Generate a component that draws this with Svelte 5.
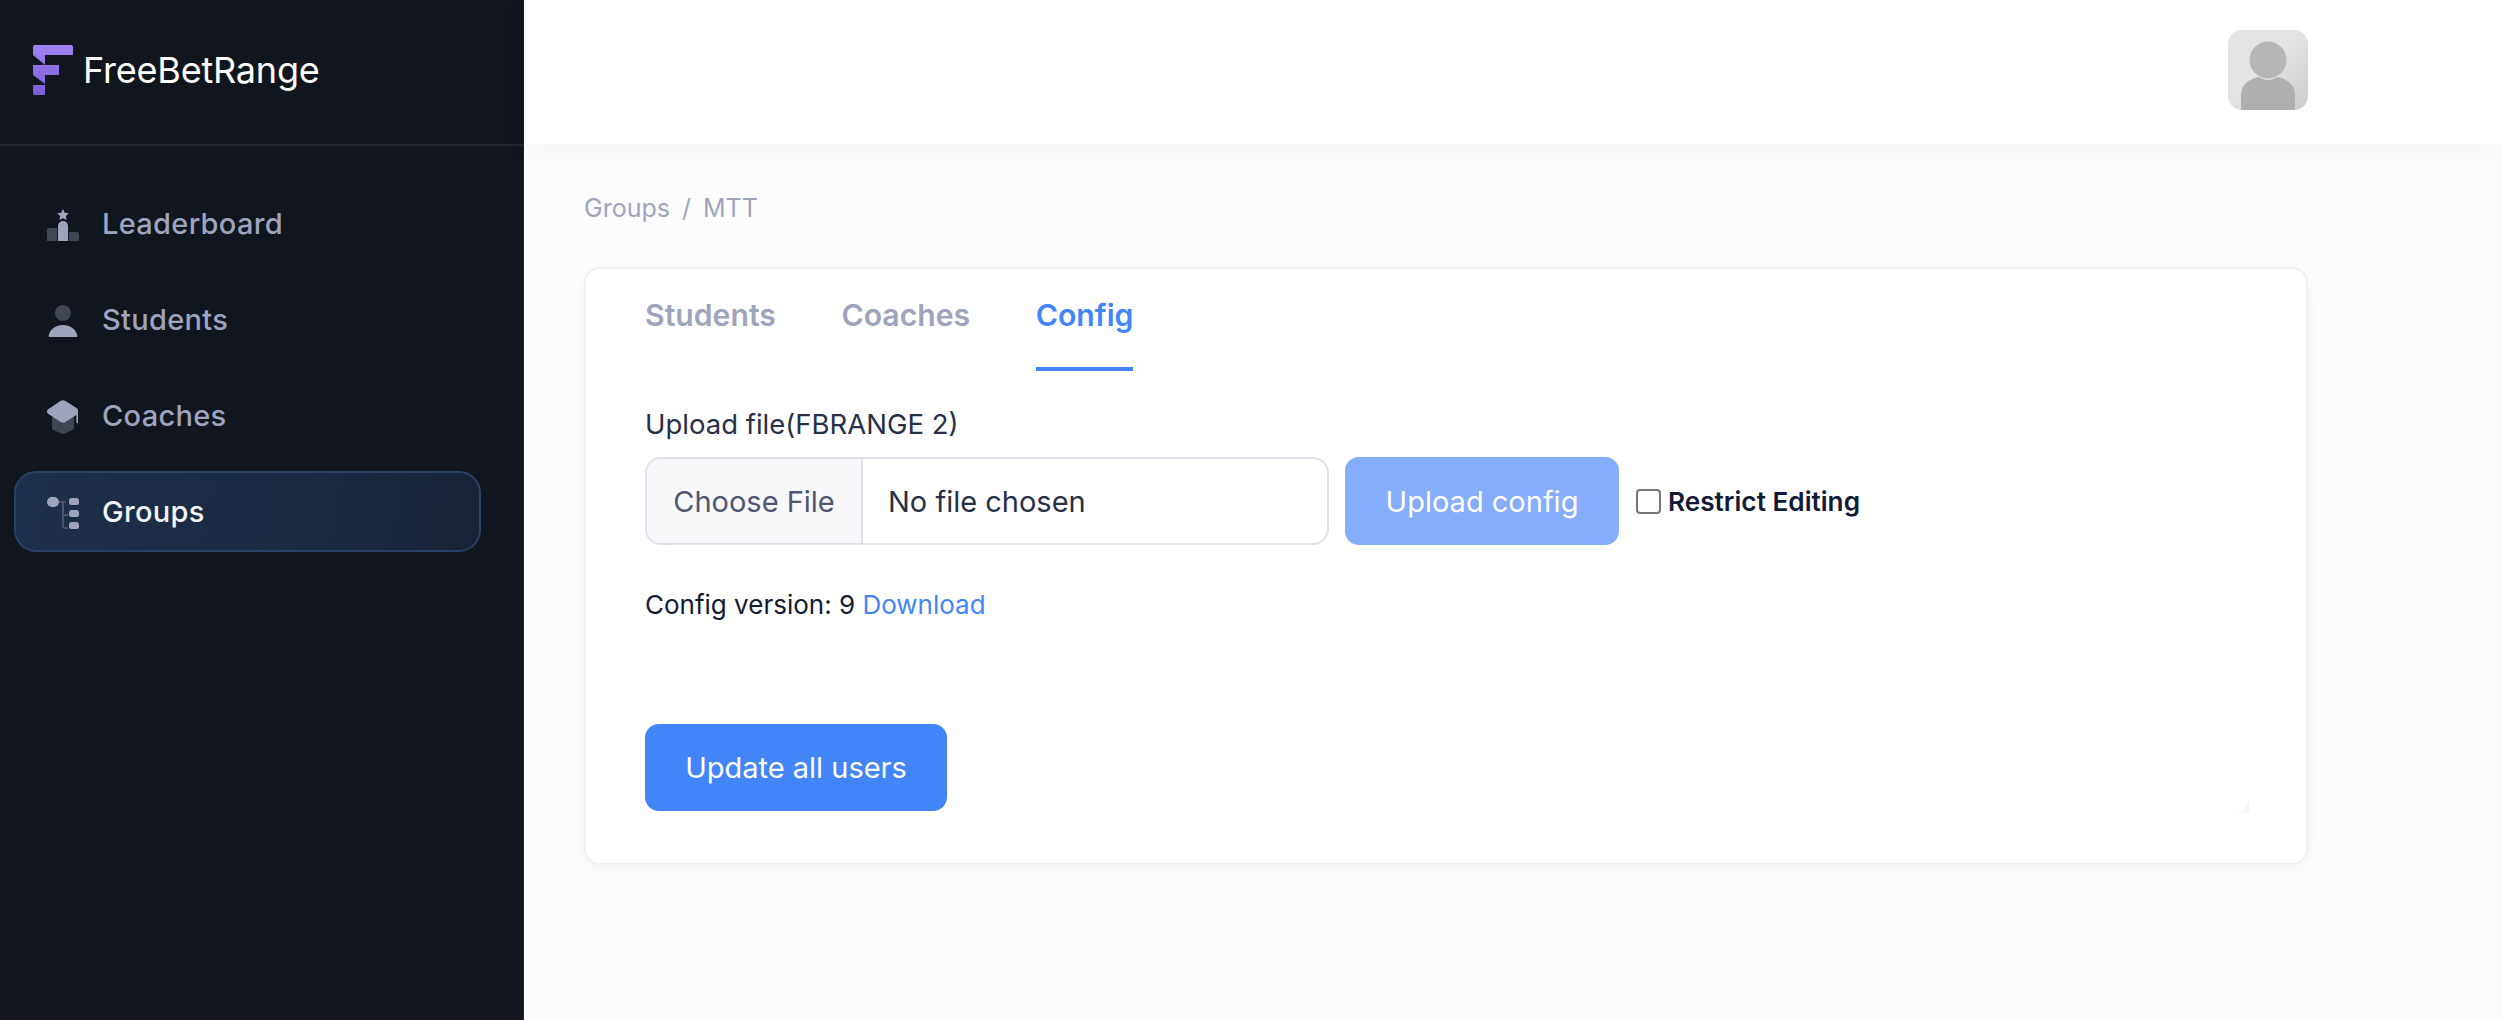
<script>
	const navItems = [
		{ name: 'Leaderboard', icon: 'board' },
		{ name: 'Students', icon: 'student' },
		{ name: 'Coaches', icon: 'coach' },
		{ name: 'Groups', icon: 'group', active: true }
	];
	const tabs = ['Students', 'Coaches', 'Config'];
	let activeTab = 'Config';
</script>

<div class="page">
	<aside class="sidebar">
		<div class="brand">
			<svg class="logo" viewBox="0 0 40 50" width="40" height="50">
				<defs>
					<linearGradient id="logoFill" x1="0" y1="0" x2="0" y2="1">
						<stop offset="0" stop-color="#9f82f0" />
						<stop offset="1" stop-color="#7c5bd6" />
					</linearGradient>
				</defs>
				<path
					fill="url(#logoFill)"
					d="M2 0H38a2 2 0 0 1 2 2V10H0V2a2 2 0 0 1 2-2ZM0 10H12V20ZM0 20H26V30H12V39L0 30ZM0 40H12V50H2a2 2 0 0 1-2-2Z"
				/>
			</svg>
			<span class="brand-name">FreeBetRange</span>
		</div>
		<nav class="nav">
			{#each navItems as item}
				<a href="#top" class="nav-item" class:active={item.active}>
					<svg class="nav-icon" viewBox="0 0 32 34" width="32" height="34">
						{#if item.icon === 'board'}
							<path fill="#414655" d="M2 20h8v13H0V22a2 2 0 0 1 2-2ZM22 24h8a2 2 0 0 1 2 2v7H22Z" />
							<path fill="#9ea4bb" d="M11 18a5 5 0 0 1 10 0v15H11Z" />
							<path fill="#9ea4bb" d="m16 1 1.800 3.700 4 .6-2.900 2.800.7 4-3.600-1.900-3.600 1.900.7-4-2.900-2.800 4-.6Z" />
						{:else if item.icon === 'student'}
							<circle cx="16" cy="9" r="8" fill="#414655" />
							<path fill="#9ea4bb" d="M2.500 33c-.6 0-1-.5-.9-1C3 25 8.500 21 16 21s13 4 14.400 11c.1.5-.3 1-.9 1Z" />
						{:else if item.icon === 'coach'}
							<path fill="#414655" d="M5 17h22v11c0 1-.5 1.600-1.300 2l-8 3.500a4 4 0 0 1-3.400 0l-8-3.500C5.500 29.600 5 29 5 28Z" />
							<path fill="#9ea4bb" d="M13.500 1a5 5 0 0 1 5 0l11 7c.9.6 1.500 1.500 1.500 2.500V23h-1.600V15l-11 7a5 5 0 0 1-4.800 0L1.500 14c-2-1.300-2-3.700 0-5Z" />
						{:else}
							<path fill="none" stroke="#4e5468" stroke-width="2" d="M10 6h9M16 6v24a2 2 0 0 0 2 2h3M16 19h5" />
							<rect x="0" y="1" width="12" height="10" rx="5" fill="#9ea4bb" />
							<rect x="22" y="2" width="10" height="7" rx="2.500" fill="#9ea4bb" />
							<rect x="22" y="14" width="10" height="7" rx="2.500" fill="#9ea4bb" />
							<rect x="22" y="26" width="10" height="7" rx="2.500" fill="#9ea4bb" />
						{/if}
					</svg>
					<span>{item.name}</span>
				</a>
			{/each}
		</nav>
	</aside>

	<div class="main">
		<header class="topbar">
			<svg class="avatar" viewBox="0 0 80 80" width="80" height="80">
				<defs>
					<linearGradient id="avatarBg" x1="0" y1="0" x2="1" y2="1">
						<stop offset="0.45" stop-color="#e3e4e6" />
						<stop offset="1" stop-color="#cbccce" />
					</linearGradient>
				</defs>
				<rect width="80" height="80" rx="14" fill="url(#avatarBg)" />
				<circle cx="40" cy="30" r="18.500" fill="#b5b6b8" />
				<path fill="#aeafb1" d="M13 80V66c0-12 8-17 18-19 3 2 6 3 9 3s6-1 9-3c10 2 18 7 18 19v14Z" />
			</svg>
		</header>

		<main class="content">
			<div class="crumbs">
				<span>Groups</span>
				<span class="sep">/</span>
				<span>MTT</span>
			</div>

			<section class="card">
				<div class="tabs">
					{#each tabs as tab}
						<button class="tab" class:current={tab === activeTab} onclick={() => (activeTab = tab)}>{tab}</button>
					{/each}
				</div>

				<div class="form">
					<div class="label">Upload file(FBRANGE 2)</div>
					<div class="upload-row">
						<label class="file">
							<span class="file-btn">Choose File</span>
							<span class="file-name">No file chosen</span>
						</label>
						<button class="btn disabled">Upload config</button>
						<label class="restrict">
							<input type="checkbox" />
							<span>Restrict Editing</span>
						</label>
					</div>
					<p class="version">Config version: 9 <a href="#top">Download</a></p>
					<button class="btn update">Update all users</button>
				</div>
				<div class="corner"></div>
			</section>
		</main>
	</div>
</div>

<style>
	:global(body) {
		margin: 0;
		background: #fcfcfc;
		font-family: Inter, 'Liberation Sans', sans-serif;
	}

	.page {
		display: flex;
		height: 1020px;
		overflow: hidden;
	}

	.sidebar {
		width: 523px;
		flex: none;
		background: #10151e;
		border-right: 1px solid #1e232d;
	}

	.brand {
		height: 146px;
		box-sizing: border-box;
		display: flex;
		align-items: center;
		gap: 10px;
		padding: 0 0 4px 33px;
		border-bottom: 2px solid #22262f;
		margin-bottom: 37px;
	}

	.brand-name {
		font-size: 36px;
		color: #fff;
		letter-spacing: -0.2px;
	}

	.nav {
		display: flex;
		flex-direction: column;
		gap: 15px;
		padding: 0 0 0 14px;
	}

	.nav-item {
		width: 467px;
		height: 81px;
		box-sizing: border-box;
		display: flex;
		align-items: center;
		gap: 23px;
		padding: 0 0 0 31px;
		border: 2px solid transparent;
		border-radius: 22px;
		color: #9ea4bd;
		font-size: 29px;
		font-weight: 500;
		letter-spacing: 0.3px;
		text-decoration: none;
	}

	.nav-item.active {
		background: linear-gradient(100deg, #1e2f4a, #1b2940 70%, #192337);
		border-color: #2a4266;
		color: #f3f5fa;
	}

	.nav-icon {
		flex: none;
		margin-top: 2px;
	}

	.main {
		flex: 1;
		min-width: 0;
	}

	.topbar {
		height: 144px;
		box-sizing: border-box;
		background: #fff;
		box-shadow: 0 8px 30px rgba(30, 35, 50, 0.035);
		display: flex;
		align-items: center;
		padding: 0 0 4px 1704px;
		position: relative;
	}

	.avatar {
		display: block;
	}

	.content {
		padding: 50px 0 0 60px;
		width: 1724px;
	}

	.crumbs {
		display: flex;
		gap: 12px;
		font-size: 25px;
		line-height: 29px;
		color: #9ea4bb;
	}

	.card {
		position: relative;
		margin-top: 44px;
		height: 598px;
		box-sizing: border-box;
		background: #fff;
		border: 2px solid #f1f1f3;
		border-radius: 16px;
		box-shadow: 0 4px 16px rgba(30, 35, 50, 0.04);
		padding: 0 58px 0 59px;
	}

	.tabs {
		display: flex;
		gap: 65.500px;
	}

	.tab {
		padding: 0 0 6px;
		height: 102px;
		border: 0;
		border-bottom: 4px solid transparent;
		background: none;
		font: 600 30.200px Inter, sans-serif;
		color: #9ea4bb;
	}

	.tab.current {
		color: #4285f9;
		border-bottom-color: #4285f9;
	}

	.label {
		margin-top: 37px;
		font-size: 27.500px;
		line-height: 32px;
		color: #283048;
	}

	.upload-row {
		display: flex;
		align-items: center;
		margin-top: 17px;
	}

	.file {
		width: 684px;
		height: 88px;
		box-sizing: border-box;
		display: flex;
		align-items: stretch;
		border: 2px solid #dee1ee;
		border-radius: 16px;
		overflow: hidden;
		font-size: 29px;
	}

	.file-btn {
		width: 214px;
		display: flex;
		align-items: center;
		justify-content: center;
		background: #f8f8fa;
		border-right: 2px solid #dee1ee;
		color: #505672;
	}

	.file-name {
		display: flex;
		align-items: center;
		padding-left: 25px;
		color: #283048;
	}

	.btn {
		height: 88px;
		border: 0;
		border-radius: 14px;
		font: 400 29px Inter, sans-serif;
		color: #fff;
	}

	.btn.disabled {
		width: 274px;
		margin-left: 16px;
		background: #84aefb;
	}

	.restrict {
		display: flex;
		align-items: center;
		margin-left: 17px;
		gap: 7px;
		font-size: 26.200px;
		font-weight: 600;
		color: #131a35;
	}

	.restrict input {
		appearance: none;
		box-sizing: border-box;
		width: 25px;
		height: 25px;
		margin: 0;
		background: #fff;
		border: 2px solid #767676;
		border-radius: 4px;
	}

	.version {
		margin: 44px 0 0;
		font-size: 26px;
		line-height: 32px;
		color: #131a35;
	}

	.version a {
		color: #4285f9;
		text-decoration: none;
	}

	.btn.update {
		display: block;
		width: 302px;
		height: 87px;
		margin-top: 103px;
		background: #4285f9;
	}

	.corner {
		position: absolute;
		right: 57px;
		bottom: 50px;
		width: 14px;
		height: 14px;
		background: radial-gradient(circle at 0 0, transparent 13px, #f6f6f7 14px);
	}
</style>
